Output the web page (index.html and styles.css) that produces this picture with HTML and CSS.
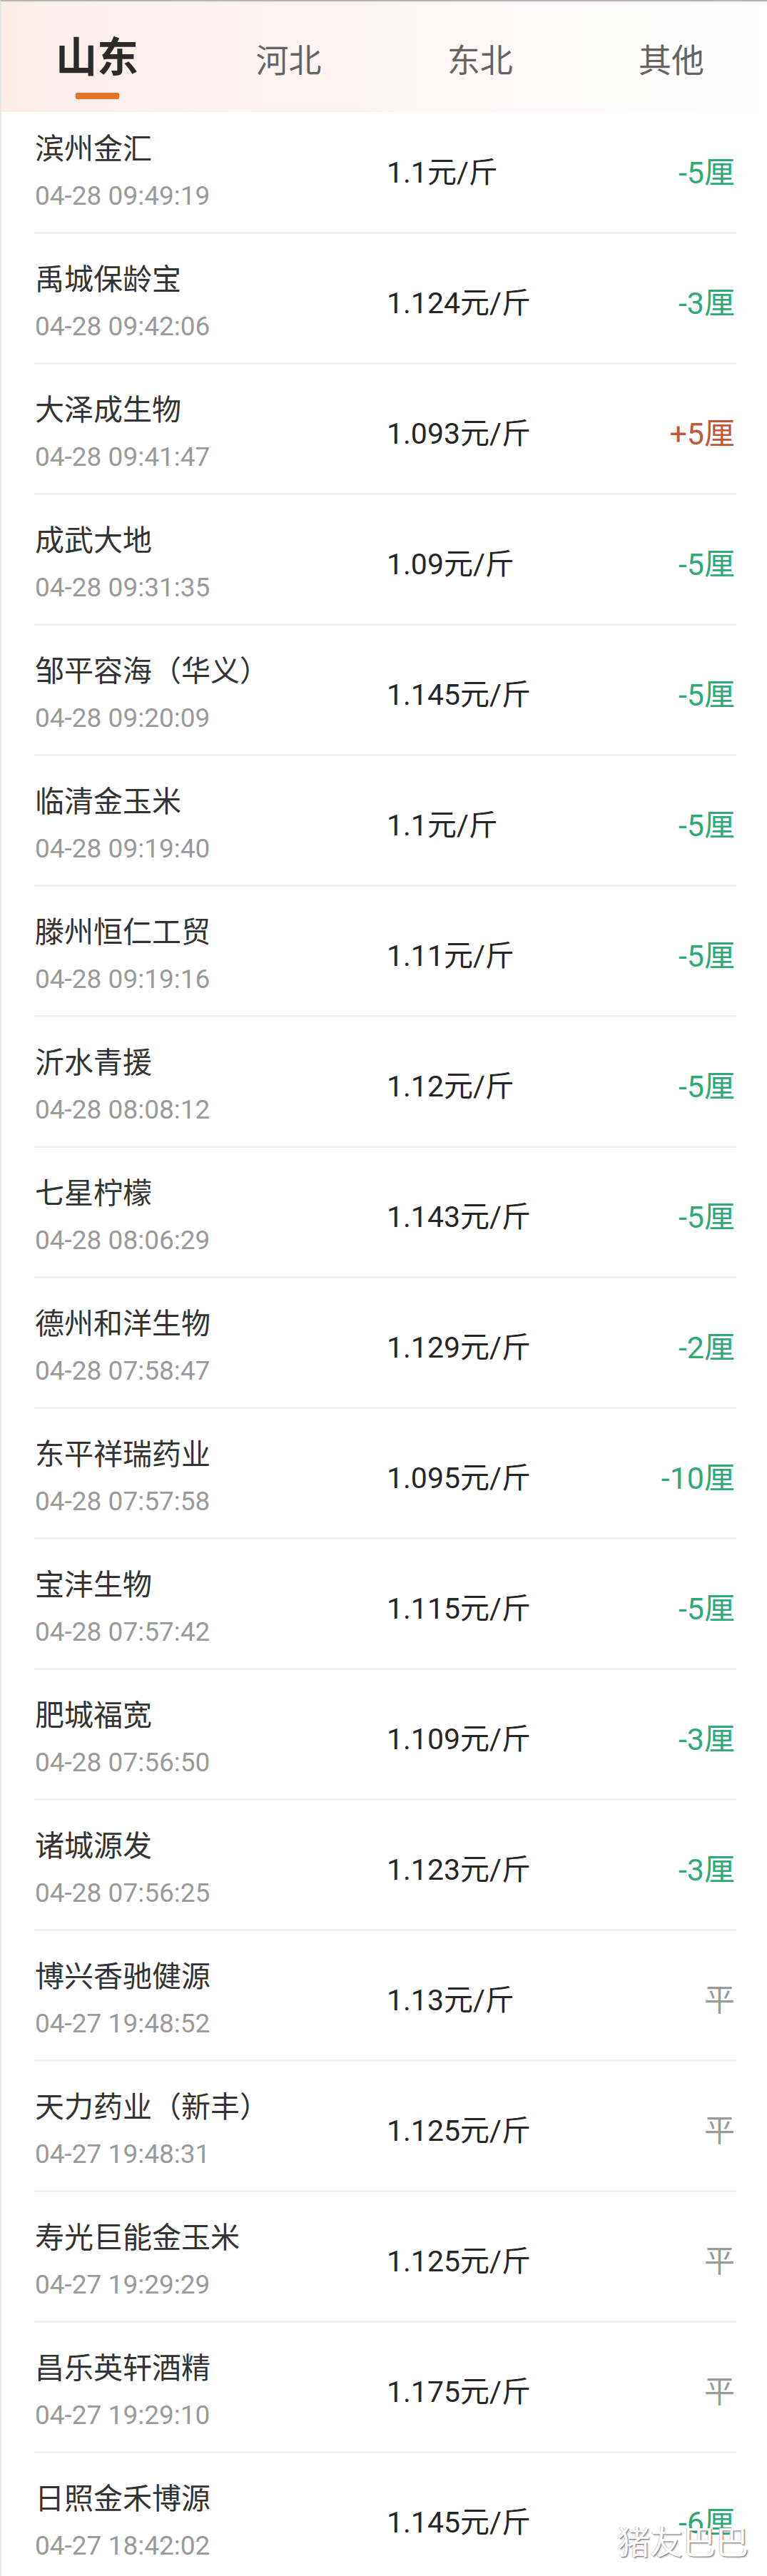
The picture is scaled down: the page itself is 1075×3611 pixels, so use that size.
FILE: index.html
```html
<!DOCTYPE html>
<html>
<head>
  <meta charset="utf-8">
  <meta name="viewport" content="width=device-width, initial-scale=1">
  <title>玉米深加工价格</title>
  <link rel="stylesheet" href="styles.css">
</head>
<body>
  <div class="page">
    <div class="tabs">
      <div class="tab active"><span>山东</span><i class="bar"></i></div>
      <div class="tab"><span>河北</span></div>
      <div class="tab"><span>东北</span></div>
      <div class="tab"><span>其他</span></div>
    </div>

    <div class="list">
      <div class="row first">
        <div class="info"><div class="name">滨州金汇</div><div class="time">04-28 09:49:19</div></div>
        <div class="price">1.1元/斤</div>
        <div class="change down">-5厘</div>
      </div>
      <div class="row">
        <div class="info"><div class="name">禹城保龄宝</div><div class="time">04-28 09:42:06</div></div>
        <div class="price">1.124元/斤</div>
        <div class="change down">-3厘</div>
      </div>
      <div class="row">
        <div class="info"><div class="name">大泽成生物</div><div class="time">04-28 09:41:47</div></div>
        <div class="price">1.093元/斤</div>
        <div class="change up">+5厘</div>
      </div>
      <div class="row">
        <div class="info"><div class="name">成武大地</div><div class="time">04-28 09:31:35</div></div>
        <div class="price">1.09元/斤</div>
        <div class="change down">-5厘</div>
      </div>
      <div class="row">
        <div class="info"><div class="name">邹平容海（华义）</div><div class="time">04-28 09:20:09</div></div>
        <div class="price">1.145元/斤</div>
        <div class="change down">-5厘</div>
      </div>
      <div class="row">
        <div class="info"><div class="name">临清金玉米</div><div class="time">04-28 09:19:40</div></div>
        <div class="price">1.1元/斤</div>
        <div class="change down">-5厘</div>
      </div>
      <div class="row">
        <div class="info"><div class="name">滕州恒仁工贸</div><div class="time">04-28 09:19:16</div></div>
        <div class="price">1.11元/斤</div>
        <div class="change down">-5厘</div>
      </div>
      <div class="row">
        <div class="info"><div class="name">沂水青援</div><div class="time">04-28 08:08:12</div></div>
        <div class="price">1.12元/斤</div>
        <div class="change down">-5厘</div>
      </div>
      <div class="row">
        <div class="info"><div class="name">七星柠檬</div><div class="time">04-28 08:06:29</div></div>
        <div class="price">1.143元/斤</div>
        <div class="change down">-5厘</div>
      </div>
      <div class="row">
        <div class="info"><div class="name">德州和洋生物</div><div class="time">04-28 07:58:47</div></div>
        <div class="price">1.129元/斤</div>
        <div class="change down">-2厘</div>
      </div>
      <div class="row">
        <div class="info"><div class="name">东平祥瑞药业</div><div class="time">04-28 07:57:58</div></div>
        <div class="price">1.095元/斤</div>
        <div class="change down">-10厘</div>
      </div>
      <div class="row">
        <div class="info"><div class="name">宝沣生物</div><div class="time">04-28 07:57:42</div></div>
        <div class="price">1.115元/斤</div>
        <div class="change down">-5厘</div>
      </div>
      <div class="row">
        <div class="info"><div class="name">肥城福宽</div><div class="time">04-28 07:56:50</div></div>
        <div class="price">1.109元/斤</div>
        <div class="change down">-3厘</div>
      </div>
      <div class="row">
        <div class="info"><div class="name">诸城源发</div><div class="time">04-28 07:56:25</div></div>
        <div class="price">1.123元/斤</div>
        <div class="change down">-3厘</div>
      </div>
      <div class="row">
        <div class="info"><div class="name">博兴香驰健源</div><div class="time">04-27 19:48:52</div></div>
        <div class="price">1.13元/斤</div>
        <div class="change flat">平</div>
      </div>
      <div class="row">
        <div class="info"><div class="name">天力药业（新丰）</div><div class="time">04-27 19:48:31</div></div>
        <div class="price">1.125元/斤</div>
        <div class="change flat">平</div>
      </div>
      <div class="row">
        <div class="info"><div class="name">寿光巨能金玉米</div><div class="time">04-27 19:29:29</div></div>
        <div class="price">1.125元/斤</div>
        <div class="change flat">平</div>
      </div>
      <div class="row">
        <div class="info"><div class="name">昌乐英轩酒精</div><div class="time">04-27 19:29:10</div></div>
        <div class="price">1.175元/斤</div>
        <div class="change flat">平</div>
      </div>
      <div class="row">
        <div class="info"><div class="name">日照金禾博源</div><div class="time">04-27 18:42:02</div></div>
        <div class="price">1.145元/斤</div>
        <div class="change down">-6厘</div>
      </div>
    </div>

    <div class="watermark">猪友巴巴</div>
  </div>
</body>
</html>
```

FILE: styles.css
```css
body {
    margin: 0;
    background-color: #fff;
    font-family: "Noto Sans CJK SC", "Noto Sans", sans-serif;
    color: #333;
}
.page {
    position: relative;
    width: 1075px;
    height: 3611px;
    overflow: hidden;
    box-sizing: border-box;
    border-top: 2px solid #b4b4b4;
    border-left: 2px solid #e6e6e6;
}

/* tabs */
.tabs {
    height: 155px;
    box-sizing: border-box;
    padding-top: 45px;
    display: grid;
    grid-template-columns: repeat(4, 1fr);
    align-items: baseline;
    background: linear-gradient(90deg, #fcede9 0%, #fdf3f0 35%, #fef9f8 65%, #ffffff 100%);
}
.tab {
    display: flex;
    flex-direction: column;
    align-items: center;
    font-size: 46px;
    line-height: 58px;
    color: #646464;
}
.tab.active {
    font-size: 58px;
    font-weight: 700;
    color: #2b2b2b;
}
.tab .bar {
    display: block;
    width: 61px;
    height: 9px;
    margin-top: 25px;
    border-radius: 2px;
    background-color: #e87428;
}

/* list */
.list {
    margin: 0 43px 0 46px;
}
.row {
    display: grid;
    grid-template-columns: 493px 1fr auto;
    align-items: center;
    padding: 36px 2px 30px 1px;
    border-bottom: 3px solid #f1f1f1;
}
.row.first {
    padding-top: 24px;
}
.name {
    font-size: 41px;
    line-height: 48px;
    color: #333;
    white-space: nowrap;
}
.time {
    margin-top: 25px;
    font-family: Roboto, "Noto Sans", sans-serif;
    font-size: 37px;
    line-height: 41px;
    color: #9a9a9a;
}
.price {
    font-family: Roboto, "Noto Sans CJK SC", sans-serif;
    font-size: 41px;
    color: #262626;
}
.change {
    font-family: Roboto, "Noto Sans CJK SC", sans-serif;
    font-size: 43px;
    text-align: right;
}
.change.down {
    color: #2eaa78;
}
.change.up {
    color: #c2573b;
}
.change.flat {
    color: #9a9a9a;
}

.watermark {
    position: absolute;
    right: 26px;
    top: 3530px;
    font-size: 46px;
    line-height: 56px;
    color: #fff;
    text-shadow: 1px 1px 0 #8a8a8a, -1px 0 0 #c8c8c8, 2px 2px 2px rgba(0, 0, 0, 0.25);
}
```
